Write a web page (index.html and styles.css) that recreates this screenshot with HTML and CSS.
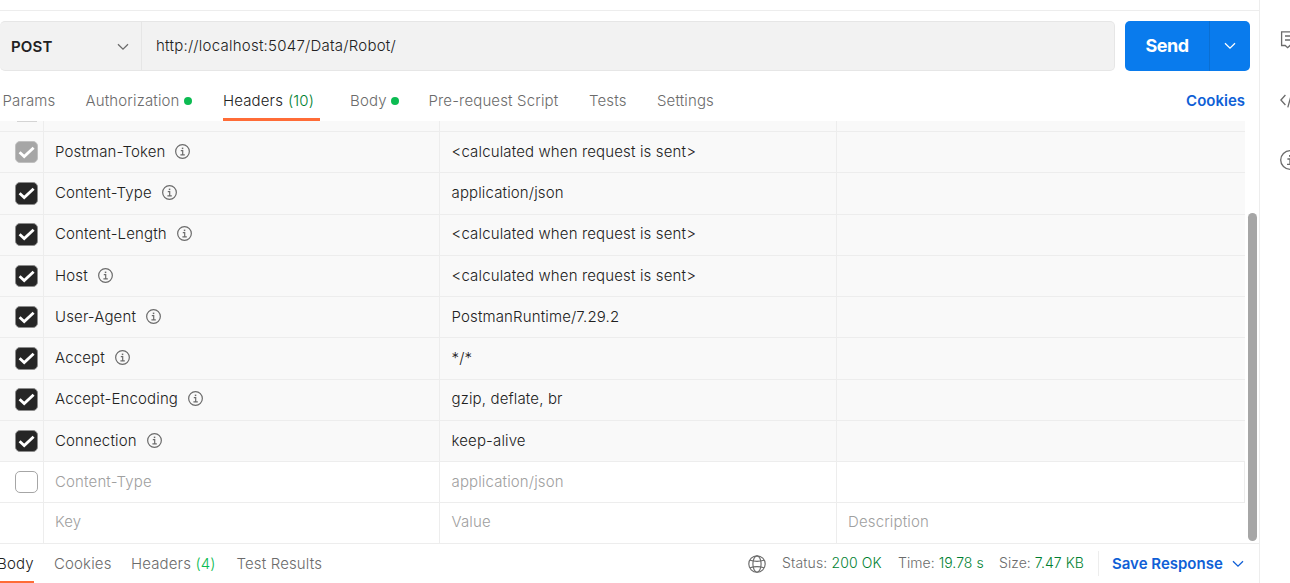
FILE: index.html
```
<!DOCTYPE html>
<html lang="en">
<head>
<meta charset="utf-8">
<title>POST request</title>
<link rel="stylesheet" href="styles.css">
</head>
<body>
<svg width="0" height="0" class="defs">
  <symbol id="info" viewBox="0 0 15 15"><circle cx="7.5" cy="7.5" r="6.85" fill="none" stroke="currentColor" stroke-width="1.2"/><path d="M5.8 6.6H7.7V10.6M5.4 10.8H9.8" fill="none" stroke="currentColor" stroke-width="1.2"/><rect x="6.8" y="3.6" width="1.5" height="1.5" fill="currentColor"/></symbol>
  <symbol id="check" viewBox="0 0 23 23"><path d="M4.6 11.3L9.2 15.6L18.6 6.7" fill="none" stroke="#fff" stroke-width="2.8"/></symbol>
  <symbol id="chevron" viewBox="0 0 12 8"><path d="M1 1.2L6 6.2L11 1.2" fill="none" stroke="currentColor" stroke-width="1.3"/></symbol>
</svg>
<div class="app">
  <main class="main">
    <div class="topline"></div>
    <div class="urlbar">
      <div class="field">
        <div class="method"><span>POST</span><svg class="chev"><use href="#chevron"/></svg></div>
        <div class="url">http://localhost:5047/Data/Robot/</div>
      </div>
      <div class="send"><div class="send-label">Send</div><div class="send-more"><svg class="chev"><use href="#chevron"/></svg></div></div>
    </div>
    <nav class="tabs">
      <div class="tab tab-params">Params</div>
      <div class="tab tab-auth">Authorization<i class="dot"></i></div>
      <div class="tab tab-headers active">Headers <span class="count">(10)</span></div>
      <div class="tab tab-body">Body<i class="dot"></i></div>
      <div class="tab tab-pre">Pre-request Script</div>
      <div class="tab tab-tests">Tests</div>
      <div class="tab tab-settings">Settings</div>
      <div class="cookies">Cookies</div>
    </nav>
    <div class="scroll">
      <div class="table">
        <div class="row stub"><div class="cell"><span class="sliver"></span></div><div class="cell"></div><div class="cell"></div><div class="cell"></div></div>
        <div class="row"><div class="cell"><span class="box on muted"><svg><use href="#check"/></svg></span></div><div class="cell">Postman-Token<svg class="info"><use href="#info"/></svg></div><div class="cell">&lt;calculated when request is sent&gt;</div><div class="cell"></div></div>
        <div class="row tall bigbox"><div class="cell"><span class="box on"><svg><use href="#check"/></svg></span></div><div class="cell">Content-Type<svg class="info"><use href="#info"/></svg></div><div class="cell">application/json</div><div class="cell"></div></div>
        <div class="row up bigbox"><div class="cell"><span class="box on"><svg><use href="#check"/></svg></span></div><div class="cell">Content-Length<svg class="info"><use href="#info"/></svg></div><div class="cell">&lt;calculated when request is sent&gt;</div><div class="cell"></div></div>
        <div class="row"><div class="cell"><span class="box on"><svg><use href="#check"/></svg></span></div><div class="cell">Host<svg class="info"><use href="#info"/></svg></div><div class="cell">&lt;calculated when request is sent&gt;</div><div class="cell"></div></div>
        <div class="row"><div class="cell"><span class="box on"><svg><use href="#check"/></svg></span></div><div class="cell">User-Agent<svg class="info"><use href="#info"/></svg></div><div class="cell">PostmanRuntime/7.29.2</div><div class="cell"></div></div>
        <div class="row tall bigbox"><div class="cell"><span class="box on"><svg><use href="#check"/></svg></span></div><div class="cell">Accept<svg class="info"><use href="#info"/></svg></div><div class="cell">*/*</div><div class="cell"></div></div>
        <div class="row up bigbox"><div class="cell"><span class="box on"><svg><use href="#check"/></svg></span></div><div class="cell">Accept-Encoding<svg class="info"><use href="#info"/></svg></div><div class="cell">gzip, deflate, br</div><div class="cell"></div></div>
        <div class="row"><div class="cell"><span class="box on"><svg><use href="#check"/></svg></span></div><div class="cell">Connection<svg class="info"><use href="#info"/></svg></div><div class="cell">keep-alive</div><div class="cell"></div></div>
        <div class="row off edge"><div class="cell"><span class="box"></span></div><div class="cell">Content-Type</div><div class="cell">application/json</div><div class="cell"></div></div>
        <div class="row off up last"><div class="cell"></div><div class="cell">Key</div><div class="cell">Value</div><div class="cell">Description</div></div>
      </div>
      <div class="gutter"><div class="thumb"></div></div>
    </div>
    <footer class="response">
      <div class="rtab rtab-body active"><span>Body</span></div>
      <div class="rtab rtab-cookies">Cookies</div>
      <div class="rtab rtab-headers">Headers <span class="count">(4)</span></div>
      <div class="rtab">Test Results</div>
      <div class="meta">
        <svg class="globe" viewBox="0 0 18 18"><g fill="none" stroke="#6b6b6b" stroke-width="1.15"><circle cx="9" cy="9" r="8.2"/><ellipse cx="9" cy="9" rx="4.1" ry="8.2"/><path d="M2 5.2Q9 7.4 16 5.2M2 12.8Q9 10.6 16 12.8"/></g></svg>
        <div class="stat stat-status">Status: <b>200 OK</b></div>
        <div class="stat stat-time">Time: <b>19.78 s</b></div>
        <div class="stat stat-size">Size: <b>7.47 KB</b></div>
        <div class="save"><span>Save Response</span><svg class="chev"><use href="#chevron"/></svg></div>
      </div>
    </footer>
  </main>
  <aside class="rail">
    <svg viewBox="0 0 20 20"><path d="M1.6 1.8H18.4V15.5H10L7.6 17.7L5.2 15.5H1.6ZM5 6H15M5 10H12" fill="none" stroke="#6b6b6b" stroke-width="1.3"/></svg>
    <svg viewBox="0 0 20 20"><path d="M5.4 5L.9 10L5.4 15M14.6 5L19.1 10L14.6 15M11.8 3L7.8 17.4" fill="none" stroke="#6b6b6b" stroke-width="1.3"/></svg>
    <svg viewBox="0 0 20 20"><circle cx="10" cy="10" r="9.3" fill="none" stroke="#6b6b6b" stroke-width="1.3"/><path d="M7.4 9H10V14M7 14.3H13" fill="none" stroke="#6b6b6b" stroke-width="1.3"/><rect x="9" y="5" width="1.8" height="1.8" fill="#6b6b6b"/></svg>
  </aside>
</div>
</body>
</html>
```
FILE: styles.css
```
* { box-sizing: border-box; }
body { margin: 0; font-family: Inter, "Liberation Sans", sans-serif; font-size: 15px; font-weight: 350; letter-spacing: 0.14px; line-height: 20px; color: #212121; background: #fff; overflow: hidden; }
.defs { position: absolute; }
svg { display: block; flex: none; }
.app { display: flex; width: 1290px; height: 583px; overflow: hidden; }
.main { width: 1260px; flex: none; border-right: 1px solid #ededed; display: flex; flex-direction: column; }
.topline { height: 11px; border-bottom: 1px solid #ededed; }
.urlbar { display: flex; gap: 10px; margin-top: 10px; height: 50px; }
.field { display: flex; width: 1115px; border: 1px solid #e6e6e6; border-left: 0; border-radius: 5px; background: #f2f2f2; }
.method { width: 142px; border-right: 1px solid #e6e6e6; display: flex; align-items: center; justify-content: space-between; padding: 2px 12px 0 11px; font-weight: 600; }
.chev { width: 12px; height: 8px; color: #6b6b6b; }
.url { padding: 14px 0 0 14px; letter-spacing: 0.24px; }
.send { display: flex; width: 125px; background: #097bed; border-radius: 5px; color: #fff; }
.send-label { width: 85px; border-right: 1px solid #0a6fd3; display: flex; align-items: center; justify-content: center; font-size: 18px; font-weight: 700; letter-spacing: -0.5px; }
.send-more { flex: 1; display: flex; align-items: center; justify-content: center; }
.send-more .chev { color: #fff; }
.tabs { display: flex; height: 50px; padding-left: 2.5px; color: #6b6b6b; flex: none; }
.tab { display: flex; padding-top: 20px; white-space: pre; flex: none; }
.tab-params { width: 83px; }
.tab-auth { width: 137.5px; }
.tab-headers { width: 97px; margin-right: 30px; }
.tab-body { width: 78.5px; }
.tab-pre { width: 160.5px; }
.tab-tests { width: 68px; }
.tab.active { color: #212121; border-bottom: 3px solid #ff6c37; }
.count { color: #007f31; }
.tab .count { margin-left: 0.5px; }
.dot { width: 8px; height: 8px; border-radius: 50%; background: #0cbb52; margin: 6px 0 0 4.5px; }
.cookies { margin: 20px 14px 0 auto; color: #0f5fd6; font-weight: 600; letter-spacing: 0; }
.scroll { display: flex; height: 423px; flex: none; }
.table { width: 1245px; }
.row { display: grid; grid-template-columns: 44px 396px 397px 1fr; height: 41px; background: #f9f9f9; border-bottom: 1px solid #ededed; }
.row.tall { height: 42px; }
.row.stub { height: 11px; }
.cell { border-right: 1px solid #ededed; display: flex; align-items: flex-start; padding: 10px 0 0 11px; white-space: pre; }
.cell:first-child { padding: 9px 0 0 15px; }
.cell:nth-child(3) { padding-left: 11.5px; }
.up .cell { padding-top: 9px; }
.up .cell:first-child { padding-top: 8px; }
.stub .cell:first-child { padding-top: 0; }
.cell:last-child { border-right: 0; }
.row.off { background: #fff; color: #a0a0a0; }
.edge .cell:last-child { border-right: 1px solid #ededed; }
.row.last { width: 1245px; border-bottom: 0; }
.sliver { width: 20px; height: 1px; background: #d4d4d4; margin-left: 2px; }
.box { width: 23px; height: 22px; border: 1px solid #a6a6a6; border-radius: 5px; }
.bigbox .box { height: 23px; }
.box.on { background: #262626; border-color: #8c8c8c; }
.box.muted { background: #a6a6a6; border-color: #c0c0c0; }
.box svg { width: 23px; height: 23px; margin: -1px; }
.info { width: 15px; height: 15px; margin: 2px 0 0 10px; color: #6b6b6b; }
.gutter { width: 14px; padding: 92px 2px 0 3px; }
.thumb { width: 9px; height: 328px; border-radius: 4.5px; background: #a6a6a6; }
.response { display: flex; flex: 1; color: #6b6b6b; height: 40px; border-top: 1px solid #ededed; margin-top: -1px; }
.rtab { padding-top: 10px; white-space: pre; flex: none; }
.rtab-body { width: 34px; margin-right: 20px; border-bottom: 2px solid #ff6c37; color: #212121; }
.rtab-body span { margin-left: -3px; }
.rtab-cookies { width: 77px; }
.rtab-headers { width: 105.5px; }
.rtab .count { color: #0cbb52; }
.meta { margin-left: auto; display: flex; padding-right: 15px; }
.globe { width: 18px; height: 18px; margin: 11px 16px 0 0; }
.stat { font-size: 14px; padding-top: 9px; white-space: pre; flex: none; }
.stat-time, .stat-size { letter-spacing: 0.05px; }
.stat b { font-weight: 350; color: #007f31; }
.stat-status { width: 116px; }
.stat-time { width: 101px; }
.stat-size { width: 99px; }
.save { border-left: 1px solid #ededed; height: 25px; margin-top: 7px; padding: 3px 0 0 13px; width: 146px; display: flex; justify-content: space-between; color: #0f5fd6; font-weight: 600; letter-spacing: 0; }
.save .chev { color: #0f5fd6; margin-top: 6px; }
.rail { width: 30px; padding: 30px 0 0 20px; overflow: hidden; }
.rail svg { width: 20px; height: 20px; margin-bottom: 40px; }
```
